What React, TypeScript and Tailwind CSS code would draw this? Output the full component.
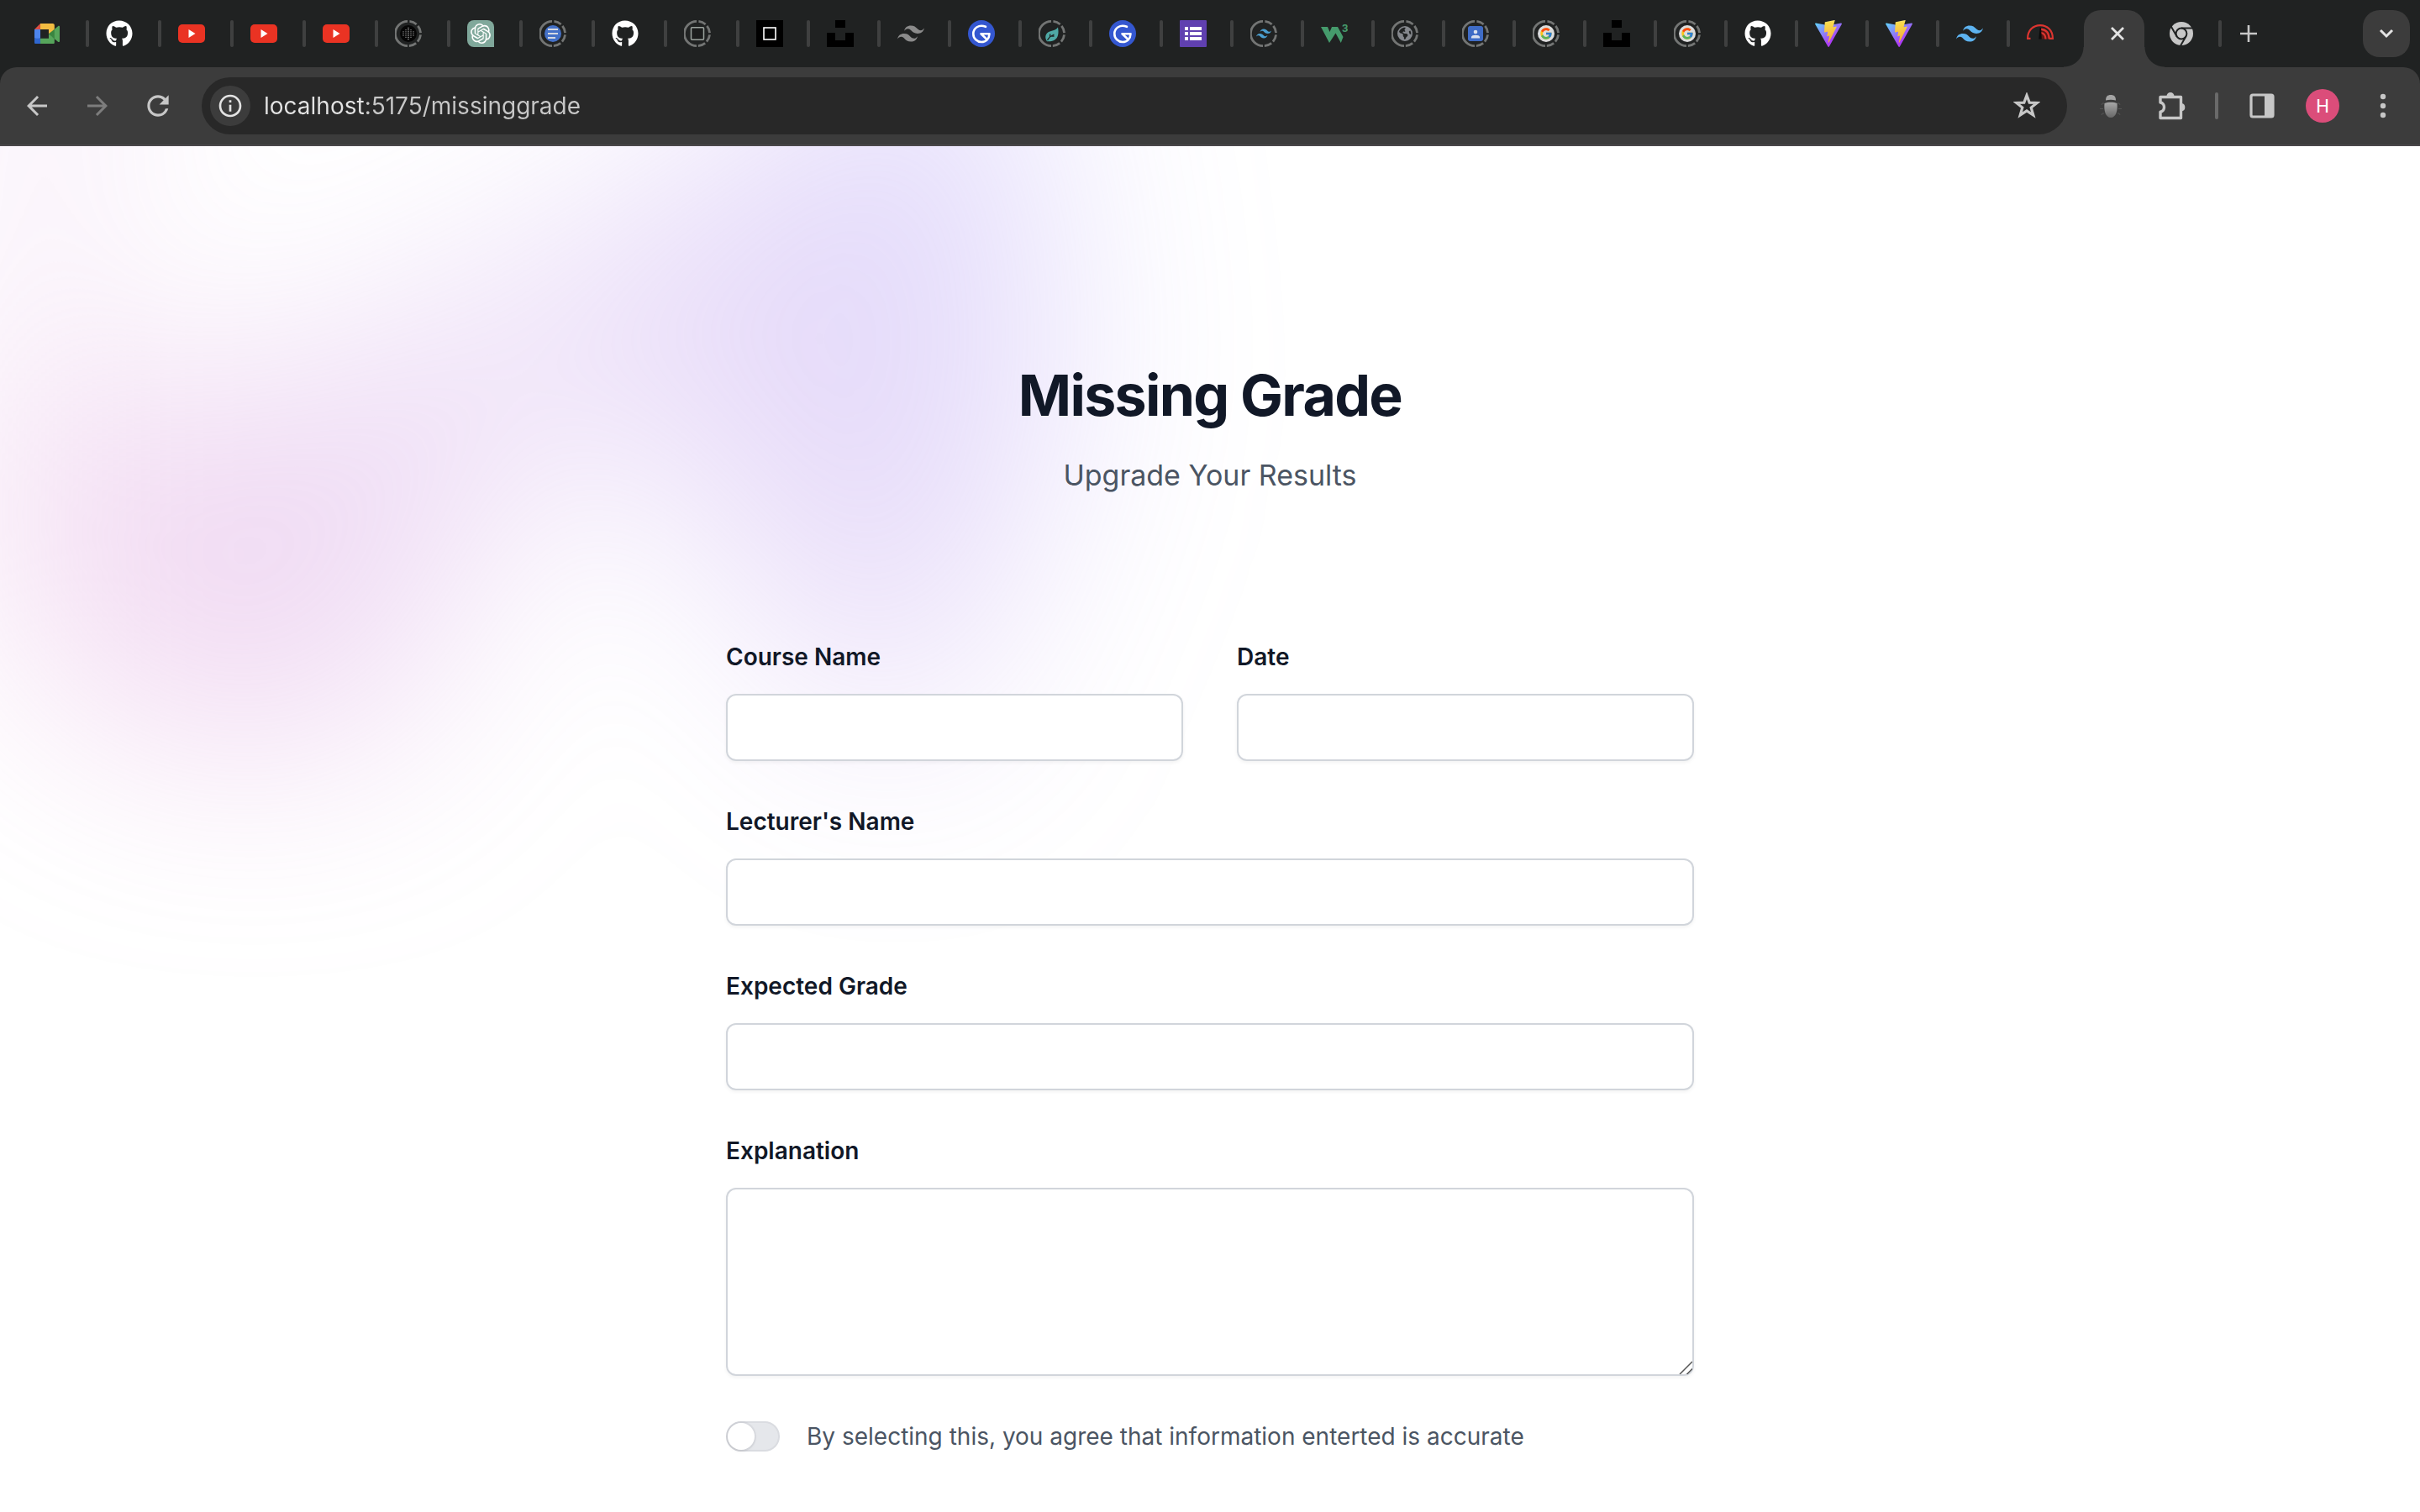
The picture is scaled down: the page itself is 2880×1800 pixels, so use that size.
import React, { useState } from "react";
import { FaGithub } from "react-icons/fa";
import { FaEarthAmericas } from "react-icons/fa6";
import { FcGoogle } from "react-icons/fc";
import { SiOpenai, SiTailwindcss } from "react-icons/si";
import { MdArrowBack, MdArrowForward, MdRefresh, MdInfoOutline } from "react-icons/md";

/* ---------- favicons, all drawn in a 32 px box ---------- */

function MeetIcon() {
  return (
    <svg viewBox="0 0 87.5 72" className="w-[30px]">
      <path fill="#3a8540" d="M49.5 36l8.53 9.75 11.47 7.33 2-17.02-2-16.64-11.69 6.44z" />
      <path fill="#2f67cf" d="M0 51.5V66c0 3.315 2.685 6 6 6h14.5l3-10.96-3-9.54-9.95-3z" />
      <path fill="#db4f42" d="M20.5 0L0 20.5l10.55 3 9.95-3 2.95-9.41z" />
      <path fill="#4d85ec" d="M20.5 20.5H0v31h20.5z" />
      <path
        fill="#56a55b"
        d="M82.6 8.68L69.5 19.42v33.66l13.16 10.79c1.97 1.54 4.85.135 4.85-2.37V11c0-2.535-2.945-3.925-4.91-2.32zM49.5 36v15.5h-29V72h43c3.315 0 6-2.685 6-6V53.08z"
      />
      <path fill="#f2bc41" d="M63.5 0h-43v20.5h29V36l20-16.57V6c0-3.315-2.685-6-6-6z" />
    </svg>
  );
}

function GithubIcon() {
  return <FaGithub className="size-8 text-white" />;
}

function YoutubeIcon() {
  return (
    <svg viewBox="0 0 32 32" className="size-8">
      <rect x="0" y="5" width="32" height="22" rx="5" fill="#ea3323" />
      <path d="M12.5 11l8 5-8 5z" fill="#fff" />
    </svg>
  );
}

function Ring({ children }: { children: React.ReactNode }) {
  return (
    <svg viewBox="0 0 32 32" className="size-8">
      <g fill="none" stroke="#737574" strokeWidth="2.8">
        <path d="M15 1.4A14.6 14.6 0 0 0 15 30.6" />
        <path d="M16 1.4A14.6 14.6 0 0 1 16 30.6" strokeDasharray="0 1.5 9 2.4 9 2.4 9 2.4 9 2" />
      </g>
      {children}
    </svg>
  );
}

function DotsIcon() {
  const rows = [
    [16],
    [13, 16, 19],
    [10, 13, 16, 19, 22],
    [10, 13, 16, 19, 22],
    [10, 13, 16, 19, 22],
    [13, 16, 19],
    [16],
  ];
  return (
    <Ring>
      <circle cx="16" cy="16" r="10" fill="#060606" />
      {rows.map((row, r) =>
        row.map((x) => (
          <rect
            key={`${r}-${x}`}
            x={x - 0.6}
            y={9.4 + r * 2.2 - 0.6}
            width="1.2"
            height="1.2"
            fill={x === 16 ? "#bdbdbd" : "#8a8a8a"}
          />
        )),
      )}
    </Ring>
  );
}

function ChatIcon() {
  return (
    <span className="flex size-8 items-center justify-center rounded-lg rounded-br-none bg-[#80a89b]">
      <SiOpenai className="size-6 text-white" />
    </span>
  );
}

function DocsIcon() {
  return (
    <Ring>
      <circle cx="16" cy="16" r="10" fill="#4471c8" />
      <path d="M10 11h12M10 16h12M10 21h9" stroke="#d5dae2" strokeWidth="2.2" />
    </Ring>
  );
}

function RingSquareIcon() {
  return (
    <Ring>
      <rect x="8.5" y="8.7" width="15" height="14.6" rx="1" fill="#1b1c1c" stroke="#9ba39e" strokeWidth="1.5" />
    </Ring>
  );
}

function BlackSquareIcon() {
  return (
    <svg viewBox="0 0 32 32" className="size-8">
      <rect width="32" height="32" fill="#000" />
      <rect x="9" y="9" width="14" height="14" fill="none" stroke="#fff" strokeWidth="1.6" />
    </svg>
  );
}

function UnsplashIcon() {
  return (
    <svg viewBox="0 0 32 32" className="size-8">
      <path d="M10 0h12v9H10zM0 15h10v9h12v-9h10v17H0z" fill="#000" />
    </svg>
  );
}

function GIcon() {
  return (
    <svg viewBox="0 0 32 32" className="size-8">
      <circle cx="16" cy="16" r="16" fill="#3457d0" />
      <path
        d="M21 7.8C13 4.5 6.3 9.5 6.3 16.2C6.3 22 11 26 16 26C21.5 26 25.3 22 25.5 16.3H15.5L21 21.5"
        fill="none"
        stroke="#fff"
        strokeWidth="2.6"
        strokeLinecap="round"
        strokeLinejoin="round"
      />
    </svg>
  );
}

function LeafIcon() {
  return (
    <Ring>
      <path
        d="M23 8.5c1.2 6.5.6 12.5-4.2 15.3-3.4 1.9-7.3 1.6-8.8 1.4-2.6-3.5-2.3-8.4 1.2-10.7C14.8 12.3 20 12.8 23 8.5z"
        fill="#4fa9a5"
      />
      <path d="M10.5 24c1.5-3 4.5-5.5 8-7M13.5 19.5l.3-3M15 19h3.5" stroke="#202222" strokeWidth="1.3" fill="none" />
    </Ring>
  );
}

function FormsIcon() {
  return (
    <svg viewBox="0 0 32 32" className="size-8">
      <rect width="32" height="32" rx="1" fill="#6040b0" />
      <path d="M6 8h4v4H6zM12 8h14v4H12zM6 14h4v4H6zM12 14h14v4H12zM6 20h4v4H6zM12 20h14v4H12z" fill="#fff" />
    </svg>
  );
}

function RingTailwindIcon() {
  return (
    <Ring>
      <SiTailwindcss x="7" y="7" size={18} color="#4a9fd0" />
    </Ring>
  );
}

function W3Icon() {
  return (
    <svg viewBox="0 0 32 32" className="size-8">
      <path d="M0 8h8l2.5 6L13 8h7l6.5 12-2.7 7L17.5 15.5 10 27z" fill="#459b6c" />
      <text x="25" y="14" fontSize="13" fontFamily="Roboto, sans-serif" fontWeight="700" fill="#459b6c">
        3
      </text>
    </svg>
  );
}

function RingGlobeIcon() {
  return (
    <Ring>
      <FaEarthAmericas x="7" y="7" size={18} color="#85888d" />
    </Ring>
  );
}

function RingContactIcon() {
  return (
    <Ring>
      <path d="M9 7h14a3 3 0 0 1 2 2v14a3 3 0 0 1-2 2H9a3 3 0 0 1-2-2V9a3 3 0 0 1 2-2z" fill="#3f6cc6" />
      <circle cx="16" cy="14" r="2.3" fill="#dbe1ee" />
      <path d="M11 21.5v-1.5c0-3 10-3 10 0v1.5z" fill="#dbe1ee" />
    </Ring>
  );
}

function RingGoogleIcon() {
  return (
    <Ring>
      <circle cx="16" cy="16" r="10" fill="#dcdcdc" />
      <FcGoogle x="8" y="8" size={16} opacity={0.9} />
    </Ring>
  );
}

function ViteIcon({ id }: { id: string }) {
  return (
    <svg viewBox="0 0 256 257" className="size-8">
      <defs>
        <linearGradient id={`${id}-a`} x1="-.828%" x2="57.636%" y1="7.652%" y2="78.411%">
          <stop offset="0%" stopColor="#63ccfb" />
          <stop offset="100%" stopColor="#ad3df5" />
        </linearGradient>
        <linearGradient id={`${id}-b`} x1="43.376%" x2="50.316%" y1="2.242%" y2="89.03%">
          <stop offset="0%" stopColor="#fbe780" />
          <stop offset="8.333%" stopColor="#fadb4c" />
          <stop offset="100%" stopColor="#f3ac3c" />
        </linearGradient>
      </defs>
      <path
        fill={`url(#${id}-a)`}
        d="M255.153 37.938L134.897 252.976c-2.483 4.44-8.862 4.466-11.382.048L.875 37.958c-2.746-4.814 1.371-10.646 6.827-9.67l120.385 21.517a6.537 6.537 0 0 0 2.322-.004l117.867-21.483c5.438-.991 9.574 4.796 6.877 9.62Z"
      />
      <path
        fill={`url(#${id}-b)`}
        d="M185.432.063L96.44 17.501a3.268 3.268 0 0 0-2.634 3.014l-5.474 92.456a3.268 3.268 0 0 0 3.997 3.378l24.777-5.718c2.318-.535 4.413 1.507 3.936 3.838l-7.361 36.047c-.495 2.426 1.782 4.5 4.151 3.78l15.304-4.649c2.372-.72 4.652 1.36 4.15 3.788l-11.698 56.621c-.732 3.542 3.979 5.473 5.943 2.437l1.313-2.028l72.516-144.72c1.215-2.423-.88-5.186-3.54-4.672l-25.505 4.922c-2.396.462-4.435-1.77-3.759-4.114l16.646-57.705c.677-2.35-1.37-4.583-3.769-4.113Z"
      />
    </svg>
  );
}

function SpeedIcon() {
  return (
    <svg viewBox="0 0 32 32" className="size-8">
      <path d="M17 9C24 9.5 28 15 28 22.5H17z" fill="#5a1714" />
      <g fill="none" stroke="#dc3530" strokeWidth="2.2">
        <path d="M4.5 21.8H1.1C1.1 12 7.5 6.1 16 6.1S30.9 12 30.9 21.8H27" />
        <path d="M17 10.8C23 11.2 26.6 15.5 26.7 22.5" />
        <path d="M17 15C20.5 15.5 22.3 18.5 22.5 22.5" />
      </g>
      <path d="M15.7 9h1.3l.8 13.5h-3.6z" fill="#0b0b0b" />
    </svg>
  );
}

function ChromeIcon() {
  return (
    <svg viewBox="0 0 28 28" className="size-7">
      <circle cx="14" cy="14" r="14" fill="#c7c7c7" />
      <circle cx="14" cy="14" r="6.4" fill="none" stroke="#202222" strokeWidth="2" />
      <path d="M14 7.6H28M8.5 17.2L1.5 5.1M19.5 17.2L12.5 29.3" stroke="#202222" strokeWidth="2" />
    </svg>
  );
}

const tabs: { title: string; wide?: boolean; icon: React.ReactNode }[] = [
  { title: "Meet", wide: true, icon: <MeetIcon /> },
  { title: "GitHub", wide: true, icon: <GithubIcon /> },
  { title: "YouTube", wide: true, icon: <YoutubeIcon /> },
  { title: "YouTube", wide: true, icon: <YoutubeIcon /> },
  { title: "YouTube", wide: true, icon: <YoutubeIcon /> },
  { title: "Dots", wide: true, icon: <DotsIcon /> },
  { title: "Chat", wide: true, icon: <ChatIcon /> },
  { title: "Document", wide: true, icon: <DocsIcon /> },
  { title: "GitHub", wide: true, icon: <GithubIcon /> },
  { title: "Frame", wide: true, icon: <RingSquareIcon /> },
  { title: "Frame", icon: <BlackSquareIcon /> },
  { title: "Unsplash", icon: <UnsplashIcon /> },
  { title: "Tailwind", icon: <SiTailwindcss className="size-8 text-[#8b8b8b]" /> },
  { title: "G", icon: <GIcon /> },
  { title: "Leaf", icon: <LeafIcon /> },
  { title: "G", icon: <GIcon /> },
  { title: "Forms", icon: <FormsIcon /> },
  { title: "Tailwind", icon: <RingTailwindIcon /> },
  { title: "W3", icon: <W3Icon /> },
  { title: "Globe", icon: <RingGlobeIcon /> },
  { title: "Contacts", icon: <RingContactIcon /> },
  { title: "Google", icon: <RingGoogleIcon /> },
  { title: "Unsplash", icon: <UnsplashIcon /> },
  { title: "Google", icon: <RingGoogleIcon /> },
  { title: "GitHub", icon: <GithubIcon /> },
  { title: "Vite", icon: <ViteIcon id="vite1" /> },
  { title: "Vite", icon: <ViteIcon id="vite2" /> },
  { title: "Tailwind", icon: <SiTailwindcss className="size-8 text-[#5db3f0]" /> },
  { title: "Speed", icon: <SpeedIcon /> },
];

function TabStrip() {
  return (
    <div className="flex h-20 items-center bg-[#202222] pr-3 pl-5">
      {tabs.map((tab, i) => (
        <button
          key={i}
          type="button"
          aria-label={tab.title}
          className={`flex h-8 flex-none items-center justify-between pl-5 ${tab.wide ? "w-[86px]" : "w-[84px]"}`}
        >
          <span className="flex size-8 items-center justify-center">{tab.icon}</span>
          {i < tabs.length - 1 && <span className="h-8 w-1 rounded-full bg-[#3f4040]" />}
        </button>
      ))}
      <div className="relative ml-1 flex h-[68px] w-[72px] flex-none items-center justify-center self-end rounded-t-[20px] bg-[#3c3c3c] pb-3 pl-2">
        <span className="absolute bottom-0 -left-6 size-6 bg-[radial-gradient(circle_at_0_0,#202222_23px,#3c3c3c_24px)]" />
        <span className="absolute -right-6 bottom-0 size-6 bg-[radial-gradient(circle_at_100%_0,#202222_23px,#3c3c3c_24px)]" />
        <button type="button" aria-label="Close tab">
          <svg viewBox="0 0 16 16" className="size-4">
            <path d="M1 1l14 14M15 1L1 15" stroke="#e3e3e3" strokeWidth="2.8" />
          </svg>
        </button>
      </div>
      <button type="button" aria-label="Chrome" className="ml-[30px] flex-none">
        <ChromeIcon />
      </button>
      <span className="ml-[30px] h-8 w-1 flex-none rounded-full bg-[#3f4040]" />
      <button type="button" aria-label="New tab" className="ml-[22px] flex-none">
        <svg viewBox="0 0 20 20" className="size-5">
          <path d="M10 0v20M0 10h20" stroke="#c7c7c7" strokeWidth="2.6" />
        </svg>
      </button>
      <button
        type="button"
        aria-label="Search tabs"
        className="ml-auto flex h-14 w-14 flex-none items-center justify-center rounded-[20px] bg-[#3c3c3c]"
      >
        <svg viewBox="0 0 18 12" className="h-3 w-[18px]">
          <path d="M2 2l7 7 7-7" fill="none" stroke="#e3e3e3" strokeWidth="3" />
        </svg>
      </button>
    </div>
  );
}

function ToolButton({ label, children }: { label: string; children: React.ReactNode }) {
  return (
    <button
      type="button"
      aria-label={label}
      className="flex h-[68px] w-[72px] flex-none items-center justify-center text-[#c7c7c7]"
    >
      {children}
    </button>
  );
}

function Toolbar() {
  return (
    <div className="bg-[#202222]">
      <div className="flex h-[94px] items-center rounded-t-[20px] border-b-2 border-[#4a474a] bg-[#3c3c3c] px-2">
        <ToolButton label="Back">
          <MdArrowBack className="size-9" />
        </ToolButton>
        <ToolButton label="Forward">
          <MdArrowForward className="size-9 text-[#7d7d7d]" />
        </ToolButton>
        <ToolButton label="Reload">
          <MdRefresh className="size-[38px]" />
        </ToolButton>
        <div className="ml-4 flex h-[68px] flex-1 items-center rounded-full bg-[#282828] pr-8 pl-2.5">
          <button
            type="button"
            aria-label="Site information"
            className="flex size-12 items-center justify-center rounded-full bg-[#3c3c3c] text-[#e3e3e3]"
          >
            <MdInfoOutline className="size-8" />
          </button>
          <input
            type="text"
            aria-label="Address"
            defaultValue="localhost:5175/missinggrade"
            className="ml-4 h-10 min-w-0 flex-1 bg-[linear-gradient(90deg,#e3e3e3_122px,#c7c7c7_122px)] bg-clip-text font-[Inter,sans-serif] text-[28px] text-transparent outline-none"
          />
          <button type="button" aria-label="Bookmark this page">
            <svg viewBox="0 0 32 32" className="size-8">
              <path
                d="M16 3.5l3.2 8.6 9.2.3-7.2 5.7 2.6 8.9L16 21.9l-7.8 5.1 2.6-8.9-7.2-5.7 9.2-.3z"
                fill="none"
                stroke="#c7c7c7"
                strokeWidth="3.2"
              />
            </svg>
          </button>
        </div>
        <div className="ml-4 flex items-center">
          <ToolButton label="Bug extension">
            <svg viewBox="0 0 28 32" className="h-8 w-7">
              <defs>
                <linearGradient id="bug" x1="0" x2="0" y1="0" y2="1">
                  <stop offset="0" stopColor="#a8a8a8" />
                  <stop offset="1" stopColor="#686868" />
                </linearGradient>
              </defs>
              <path
                d="M3 15l1-2h2M25 15l-1-2h-2M1 19.5h4M27 19.5h-4M3 27l1-2h2M25 27l-1-2h-2"
                stroke="#555"
                strokeWidth="1"
                fill="none"
              />
              <path d="M8 9.500C8 5 10 3 14 3s6 2 6 6.500c-4-1-8-1-12 0z" fill="#a4a4a4" />
              <path d="M6.500 13c4-1.800 11-1.800 15 0C22.500 22 20 30 14 30S5.500 22 6.500 13z" fill="url(#bug)" />
            </svg>
          </ToolButton>
          <ToolButton label="Extensions">
            <svg viewBox="0 0 34 34" className="size-[34px]">
              <path
                d="M4 6.5H28.5V31.500H4V24.300C10 23.500 10 13.700 4 13z"
                fill="none"
                stroke="currentColor"
                strokeWidth="3.4"
                strokeLinejoin="round"
              />
              <path d="M11.500 5.500a4.500 4.500 0 0 1 9 0zM29.500 14a4.800 4.800 0 0 1 0 9.400z" fill="currentColor" />
            </svg>
          </ToolButton>
          <span className="mx-4 h-8 w-1 rounded-full bg-[#6a6a6a]" />
          <ToolButton label="Side panel">
            <svg viewBox="0 0 30 30" className="size-[30px]">
              <rect x="2" y="2" width="26" height="26" rx="2" fill="none" stroke="currentColor" strokeWidth="3.2" />
              <path d="M18 2h9v26h-9z" fill="currentColor" />
            </svg>
          </ToolButton>
          <ToolButton label="Profile">
            <span className="flex size-10 items-center justify-center rounded-full bg-[#db4d7a] font-[Roboto,sans-serif] text-[22px] text-white">
              H
            </span>
          </ToolButton>
          <ToolButton label="Menu">
            <svg viewBox="0 0 8 30" className="h-[30px] w-2">
              <circle cx="4" cy="4" r="3.2" fill="currentColor" />
              <circle cx="4" cy="15" r="3.2" fill="currentColor" />
              <circle cx="4" cy="26" r="3.2" fill="currentColor" />
            </svg>
          </ToolButton>
        </div>
      </div>
    </div>
  );
}

/* ---------- page ---------- */

const fieldClass =
  "block w-full rounded-xl bg-white px-7 py-4 text-[28px] leading-[48px] text-gray-900 shadow-[0_2px_4px_0_rgb(0_0_0/0.05)] ring-2 ring-[#d1d5db] outline-none ring-inset";

function Field({ id, label, className = "" }: { id: string; label: string; className?: string }) {
  return (
    <div className={className}>
      <label htmlFor={id} className="block text-[28px] leading-[48px] font-semibold text-[#111827]">
        {label}
      </label>
      <input id={id} type="text" className={`mt-5 ${fieldClass}`} />
    </div>
  );
}

function MissingGradeForm() {
  const [agreed, setAgreed] = useState(false);
  return (
    <form className="mx-auto mt-40 grid max-w-[1152px] grid-cols-2 gap-x-16 gap-y-12">
      <Field id="course" label="Course Name" />
      <Field id="date" label="Date" />
      <Field id="lecturer" label="Lecturer's Name" className="col-span-2" />
      <Field id="grade" label="Expected Grade" className="col-span-2" />
      <div className="col-span-2">
        <label htmlFor="explanation" className="block text-[28px] leading-[48px] font-semibold text-[#111827]">
          Explanation
        </label>
        <div className="relative mt-5">
          <textarea id="explanation" rows={4} className={`resize-none ${fieldClass}`} />
          <svg viewBox="0 0 16 16" className="pointer-events-none absolute right-0.5 bottom-0.5 size-4">
            <path d="M1 16L16 1M9.5 16L16 9.5" stroke="#555" strokeWidth="1.5" />
          </svg>
        </div>
      </div>
      <div className="col-span-2 flex items-center gap-x-8">
        <input
          id="agree"
          type="checkbox"
          role="switch"
          checked={agreed}
          onChange={(e) => setAgreed(e.target.checked)}
          className="h-9 w-16 flex-none cursor-pointer appearance-none rounded-full bg-[#e5e7eb] p-0.5 ring-2 ring-[#111827]/5 ring-inset before:block before:size-8 before:rounded-full before:bg-white before:shadow-[0_0_0_2px_rgb(17_24_39/0.05),0_2px_4px_0_rgb(0_0_0/0.05)] before:transition-transform checked:bg-indigo-600 checked:before:translate-x-7"
        />
        <label htmlFor="agree" className="text-[28px] leading-[48px] text-[#4b5563]">
          By selecting this, you agree that information enterted is accurate
        </label>
      </div>
    </form>
  );
}

export default function App() {
  return (
    <div className="flex h-screen flex-col overflow-hidden bg-white font-[Inter,sans-serif]">
      <header className="flex-none">
        <TabStrip />
        <Toolbar />
      </header>
      <main className="relative isolate flex-1 overflow-hidden bg-white px-16 pt-64">
        <div aria-hidden="true" className="absolute inset-x-0 -top-[640px] -z-10 overflow-hidden blur-[128px]">
          <div className="relative left-[calc(50%-1280px)] aspect-[1155/678] w-[2310px] max-w-none -translate-x-1/2 rotate-30 bg-linear-to-tr/srgb from-[#ff80b5] to-[#9089fc] opacity-30 [clip-path:polygon(74.1%_44.1%,100%_61.6%,97.5%_26.9%,85.5%_0.1%,80.7%_2%,72.5%_32.5%,60.2%_62.4%,52.4%_68.1%,47.5%_58.3%,45.2%_34.5%,27.5%_76.7%,0.1%_64.9%,17.9%_100%,27.6%_76.8%,76.1%_97.7%,74.1%_44.1%)]" />
        </div>
        <div className="mx-auto max-w-[1344px] text-center">
          <h1 className="text-[68px] leading-[80px] font-bold tracking-tight text-[#111827]">Missing Grade</h1>
          <p className="mt-6 text-[34px] leading-[64px] text-[#4b5563]">Upgrade Your Results</p>
        </div>
        <MissingGradeForm />
      </main>
    </div>
  );
}
